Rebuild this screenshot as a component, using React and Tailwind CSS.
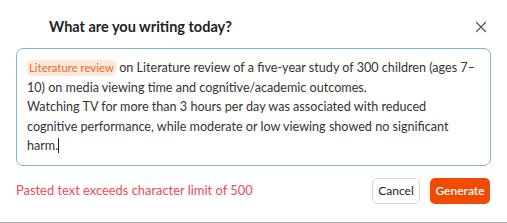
import { X } from 'lucide-react';

export default function App() {
    return (
        <div className="w-[507px] h-[223px] bg-white border-b border-[#a8a8a8] font-['Lato',sans-serif] text-[#2b2b2b]">
            <div className="flex items-start justify-between pl-[49px] pr-[17px] pt-[17px]">
                <h2 className="text-[14.5px] font-bold leading-[20px] text-[#222]">What are you writing today?</h2>
                <button className="text-[#555] mt-[1px]">
                    <X size={18} strokeWidth={1.6} />
                </button>
            </div>

            <div className="mx-[16px] mt-[11px] h-[118px] rounded-[7px] border border-[#7fb6d8] pl-[10px] pr-[13px] pt-[9px] text-[12.6px] leading-[19.5px] text-[#333]">
                <span className="inline-block rounded-[4px] bg-[#fde8dc] px-[2px] leading-[16px] text-[11.4px] text-[#f06a1c]">Literature review</span>{' '}
                on Literature review of a five-year study of 300 children (ages 7–10) on media viewing time and cognitive/academic outcomes.
                <br />
                Watching TV for more than 3 hours per day was associated with reduced cognitive performance, while moderate or low viewing showed no significant harm.
                <span className="inline-block w-[1px] h-[15px] bg-[#222] align-[-3px]"></span>
            </div>

            <div className="flex items-center justify-between pl-[16px] pr-[17px] mt-[12px]">
                <p className="text-[12.9px] text-[#f04a55]">Pasted text exceeds character limit of 500</p>
                <div className="flex gap-[10px]">
                    <button className="h-[26px] w-[48px] rounded-[5px] border border-[#d8d8d8] bg-white text-[12px] text-[#222]">Cancel</button>
                    <button className="h-[26px] w-[60px] rounded-[5px] bg-[#f04b00] text-[12px] font-semibold text-white">Generate</button>
                </div>
            </div>
        </div>
    );
}
